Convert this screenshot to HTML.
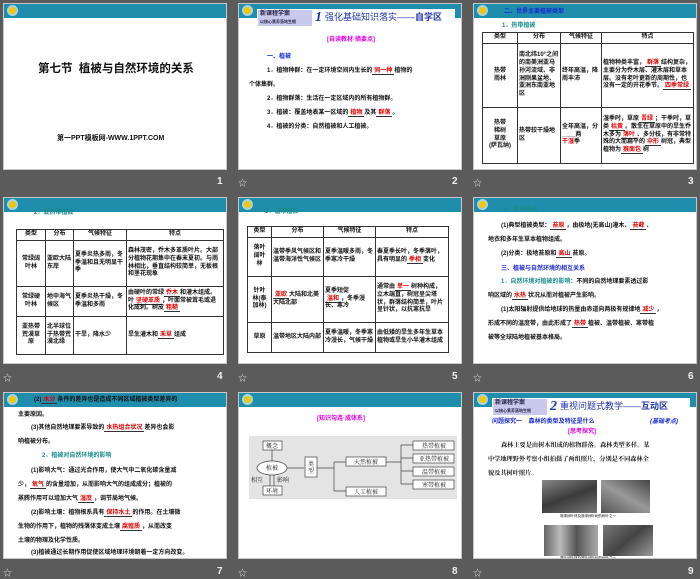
<!DOCTYPE html>
<html><head><meta charset="utf-8"><style>
*{margin:0;padding:0;box-sizing:border-box}
body{width:700px;height:577px;background:#5b5b5b;position:relative;overflow:hidden;font-family:"Liberation Sans","Noto Sans CJK SC",sans-serif;color:#222}
.s{position:absolute;width:224px;height:167px;background:#fff;border:1px solid #c8c8c8;overflow:hidden}
.hd{position:absolute;left:0;top:0;width:100%;height:14px;background:#1f8eac}
.sun{position:absolute;left:3px;top:1px;width:11px;height:11px;border-radius:50%;background:#f3c600;border:2px solid #a8d4e0}
.n{position:absolute;color:#eee;font:bold 10px "Liberation Sans",sans-serif}
.st{position:absolute;color:#ddd;font-size:9px}
.a{position:absolute;white-space:nowrap;font-size:6px;line-height:8px;font-weight:bold;color:#111}
.r{color:#e00000}
.u{border-bottom:1px solid #333;color:#e00000;padding:0 2px}
table{position:absolute;border-collapse:collapse;font-size:6px;line-height:7.8px;font-weight:bold;color:#111}
td{border:1px solid #333;padding:0 1px;vertical-align:middle}
th{border:1px solid #333;font-weight:bold;height:11px}
.c{text-align:center}
.logo{position:absolute;background:#c9c9ee;font-size:6px;line-height:7px;color:#224;padding:1px 2px;font-weight:bold}
</style></head><body>

<!-- slide 1 -->
<div class="s" style="left:3px;top:3px"><div class="hd"></div><div class="sun"></div>
<div class="a" style="left:34px;top:58px;font-size:11.5px;line-height:14px">第七节&nbsp; 植被与自然环境的关系</div>
<div class="a" style="left:53px;top:131px;font-size:7px">第一PPT模板网-WWW.1PPT.COM</div>
</div>
<div class="n" style="left:217px;top:176px">1</div>

<!-- slide 2 -->
<div class="s" style="left:238px;top:3px"><div class="hd"></div><div class="sun"></div>
<div style="position:absolute;left:18px;top:5px;width:198px;height:19px;background:#fff"></div>
<div class="logo" style="left:19px;top:6px;width:54px;height:16px">新课程学案<br><span style="font-size:4px">以核心素养落地生根</span></div>
<div class="a" style="left:76px;top:5px;font-size:14px;line-height:17px;color:#2236a8;font-style:italic;font-family:'Liberation Serif',serif">1</div>
<div class="a" style="left:86px;top:8px;font-size:9px;line-height:11px;color:#2236a8;font-weight:normal">强化基础知识落实——<b>自学区</b></div>
<div class="a" style="left:88px;top:32px;color:#e000e0">[自读教材·摘要点]</div>
<div class="a" style="left:28px;top:49px;color:#1a2ad0">一、植被</div>
<div class="a" style="left:28px;top:63px">1．植物种群：在一定环境空间内生长的<span class="u">同一种</span>植物的</div>
<div class="a" style="left:10px;top:77px">个体集群。</div>
<div class="a" style="left:28px;top:91px">2．植物群落：生活在一定区域内的所有植物群。</div>
<div class="a" style="left:28px;top:105px">3．植被：覆盖地表某一区域的<span class="u">植物</span>及其<span class="u">群落</span>。</div>
<div class="a" style="left:28px;top:119px">4．植被的分类：自然植被和人工植被。</div>
</div>
<div class="st" style="left:238px;top:176px">☆</div><div class="n" style="left:452px;top:176px">2</div>

<!-- slide 3 -->
<div class="s" style="left:473px;top:3px"><div class="hd"></div><div class="sun"></div>
<div class="a" style="left:30px;top:4px;color:#1a2ad0">二、世界主要植被类型</div>
<div class="a" style="left:28px;top:18px;color:#1a8a8a">1．热带植被</div>
<table style="left:8px;top:28px;width:212px">
<tr><th style="width:35px">类型</th><th style="width:43px">分布</th><th style="width:41px">气候特征</th><th>特点</th></tr>
<tr style="height:64px"><td class="c">热带<br>雨林</td><td>南北纬10°之间的南美洲亚马孙河流域、非洲刚果盆地、亚洲东南亚地区</td><td>终年高温，降雨丰沛</td><td>植物种类丰富，<span class="u">群落</span>结构复杂，主要分为乔木层、灌木层和草本层。没有老叶更新的周期性，也没有一定的开花季节。<span class="u">四季常绿</span></td></tr>
<tr style="height:56px"><td class="c">热带<br>稀树<br>草原<br>(萨瓦纳)</td><td>热带较干燥地区</td><td>全年高温，分____两<br><span class="r">干湿</span>季</td><td>湿季时，草原<span class="u">青绿</span>；干季时，草类<span class="u">枯黄</span>。散生在草原中的旱生乔木多为<span class="u">落叶</span>、多分枝，有非常特殊的大而扁平的<span class="u">伞形</span>树冠，典型植物为<span class="u">猴面包</span>树</td></tr>
</table>
</div>
<div class="st" style="left:473px;top:176px">☆</div><div class="n" style="left:688px;top:176px">3</div>

<!-- slide 4 -->
<div class="s" style="left:3px;top:197px"><div class="hd"></div><div class="sun"></div>
<div class="a" style="left:30px;top:11px;color:#1a8a8a">2．亚热带植被</div>
<table style="left:12px;top:31px;width:208px">
<tr><th style="width:29px">类型</th><th style="width:28px">分布</th><th style="width:53px">气候特征</th><th>特点</th></tr>
<tr style="height:46px"><td class="c">常绿阔<br>叶林</td><td>亚欧大陆东岸</td><td>夏季炎热多雨，冬季温和且无明显干季</td><td>森林茂密，乔木多革质叶片。大部分植物花期集中在春末夏初。与雨林相比，垂直结构较简单，无板根和茎花现象</td></tr>
<tr style="height:30px"><td class="c">常绿硬<br>叶林</td><td>地中海气候区</td><td>夏季炎热干燥，冬季温和多雨</td><td>由硬叶的常绿<span class="u">乔木</span>和灌木组成。叶<span class="u">坚硬革质</span>，叶面常被茸毛或退化成刺。树皮<span class="u">粗糙</span></td></tr>
<tr style="height:38px"><td class="c">亚热带<br>荒漠草<br>原</td><td>北半球位于热带荒漠北缘</td><td>干旱，降水少</td><td>旱生灌木和<span class="u">禾草</span>组成</td></tr>
</table>
</div>
<div class="st" style="left:3px;top:371px">☆</div><div class="n" style="left:217px;top:371px">4</div>

<!-- slide 5 -->
<div class="s" style="left:238px;top:197px"><div class="hd"></div><div class="sun"></div>
<div class="a" style="left:26px;top:10px;color:#1a8a8a">3．温带植被</div>
<table style="left:8px;top:28px;width:202px">
<tr><th style="width:24px">类型</th><th style="width:52px">分布</th><th style="width:52px">气候特征</th><th>特点</th></tr>
<tr style="height:39px"><td class="c">落叶<br>阔叶<br>林</td><td>温带季风气候区和温带海洋性气候区</td><td>夏季温暖多雨，冬季寒冷干燥</td><td>春夏季长叶，冬季落叶，具有明显的<span class="u">季相</span>变化</td></tr>
<tr style="height:46px"><td class="c">针叶<br>林(泰<br>加林)</td><td><span class="u">亚欧</span>大陆和北美大陆北部</td><td>夏季短促<br><span class="u">温和</span>，冬季漫长、寒冷</td><td>通常由<span class="u">单一</span>树种构成，立木端直，树冠呈尖塔状，群落结构简单，叶片呈针状，以抗寒抗旱</td></tr>
<tr style="height:30px"><td class="c">草原</td><td>温带地区大陆内部</td><td>夏季温暖，冬季寒冷漫长，气候干燥</td><td>由低矮的旱生多年生草本植物或旱生小半灌木组成</td></tr>
</table>
</div>
<div class="st" style="left:238px;top:371px">☆</div><div class="n" style="left:452px;top:371px">5</div>

<!-- slide 6 -->
<div class="s" style="left:473px;top:197px"><div class="hd"></div><div class="sun"></div>
<div class="a" style="left:30px;top:8px;color:#1a8a8a">4．寒带植被</div>
<div class="a" style="left:27px;top:24px">(1)典型植被类型：<span class="u">苔原</span>，由极地(无高山)灌木、<span class="u">苔藓</span>、</div>
<div class="a" style="left:14px;top:38px">地衣和多年生草本植物组成。</div>
<div class="a" style="left:27px;top:52px">(2)分类：极地苔原和<span class="u">高山</span>苔原。</div>
<div class="a" style="left:27px;top:67px;color:#1a2ad0">三、植被与自然环境的相互关系</div>
<div class="a" style="left:27px;top:80px"><span style="color:#1a8a8a">1．自然环境对植被的影响：</span>不同的自然地理要素透过影</div>
<div class="a" style="left:14px;top:94px">响区域的<span class="u">水热</span>状况从而对植被产生影响。</div>
<div class="a" style="left:27px;top:108px">(1)太阳辐射提供给地球的热量由赤道向两极有规律地<span class="u">减少</span>，</div>
<div class="a" style="left:14px;top:122px">形成不同的温度带，由此形成了<span class="u">热带</span>植被、温带植被、寒带植</div>
<div class="a" style="left:14px;top:136px">被等全球陆地植被基本格局。</div>
</div>
<div class="st" style="left:473px;top:371px">☆</div><div class="n" style="left:688px;top:371px">6</div>

<!-- slide 7 -->
<div class="s" style="left:3px;top:392px"><div class="hd"></div><div class="sun"></div>
<div class="a" style="left:30px;top:3px">(2)<span class="u">水分</span>条件的差异也是造成不同区域植被类型差异的</div>
<div class="a" style="left:14px;top:18px">主要原因。</div>
<div class="a" style="left:27px;top:31px">(3)其他自然地理要素导致的<span class="u">水热组合状况</span>差异也会影</div>
<div class="a" style="left:14px;top:45px">响植被分布。</div>
<div class="a" style="left:38px;top:59px;color:#1a8a8a">2．植被对自然环境的影响</div>
<div class="a" style="left:27px;top:74px">(1)影响大气：通过光合作用，使大气中二氧化碳含量减</div>
<div class="a" style="left:14px;top:88px">少，<span class="u">氧气</span>的含量增加，从而影响大气的组成成分；植被的</div>
<div class="a" style="left:14px;top:102px">蒸腾作用可以增加大气<span class="u">湿度</span>，调节局地气候。</div>
<div class="a" style="left:27px;top:116px">(2)影响土壤：植物根系具有<span class="u">保持水土</span>的作用。在土壤微</div>
<div class="a" style="left:14px;top:130px">生物的作用下，植物的残落体变成土壤<span class="u">腐殖质</span>，从而改变</div>
<div class="a" style="left:14px;top:144px">土壤的物理及化学性质。</div>
<div class="a" style="left:27px;top:156px">(3)植被通过长期作用促使区域地理环境朝着一定方向改变。</div>
</div>
<div class="st" style="left:3px;top:566px">☆</div><div class="n" style="left:217px;top:566px">7</div>

<!-- slide 8 -->
<div class="s" style="left:238px;top:392px"><div class="hd"></div><div class="sun"></div>
<div class="a" style="left:78px;top:22px;color:#e000e0">[知识勾连·成体系]</div>
<div style="position:absolute;left:10px;top:43px;width:208px;height:63px;background:#e4e4e4"></div>
<svg style="position:absolute;left:0;top:0" width="224" height="167" font-family="Liberation Serif,Noto Serif CJK SC,serif" font-size="6">
<g fill="#fff" stroke="#444" stroke-width=".7">
<rect x="24" y="48" width="19" height="9"/><rect x="24" y="93" width="19" height="9"/>
<ellipse cx="33" cy="75" rx="15" ry="7"/>
<rect x="66" y="64" width="12" height="20"/>
<rect x="107" y="64" width="40" height="9"/><rect x="107" y="94" width="40" height="9"/>
<rect x="174" y="48" width="41" height="9"/><rect x="174" y="61" width="41" height="9"/><rect x="174" y="74" width="41" height="9"/><rect x="174" y="87" width="41" height="9"/>
</g>
<g stroke="#444" stroke-width=".7" fill="none">
<path d="M33 57V68M31 82V93M35 82V93M48 75H65M78 75H95M95 69V98M95 69H107M95 98H107M147 69H162M162 52V91M162 52H174M162 65H174M162 78H174M162 91H174"/>
</g>
<g fill="#222"><text x="27" y="55">概念</text><text x="27" y="100">环境</text><text x="27" y="77">植被</text>
<text x="69" y="73">类</text><text x="69" y="80">型</text><text x="12" y="89">相互</text><text x="38" y="89">影响</text>
<text x="115" y="71">天然植被</text><text x="115" y="101">人工植被</text>
<text x="183" y="55">热带植被</text><text x="180" y="68">亚热带植被</text><text x="183" y="81">温带植被</text><text x="183" y="94">寒带植被</text></g>
</svg>
</div>
<div class="st" style="left:238px;top:566px">☆</div><div class="n" style="left:452px;top:566px">8</div>

<!-- slide 9 -->
<div class="s" style="left:473px;top:392px"><div class="hd"></div><div class="sun"></div>
<div style="position:absolute;left:18px;top:5px;width:198px;height:19px;background:#fff"></div>
<div class="logo" style="left:19px;top:6px;width:54px;height:16px">新课程学案<br><span style="font-size:4px">以核心素养落地生根</span></div>
<div class="a" style="left:76px;top:5px;font-size:14px;line-height:17px;color:#2236a8;font-style:italic;font-family:'Liberation Serif',serif">2</div>
<div class="a" style="left:86px;top:8px;font-size:9px;line-height:11px;color:#2236a8;font-weight:normal">重视问题式教学——<b>互动区</b></div>
<div class="a" style="left:18px;top:25px;color:#1a2ad0">问题探究一&nbsp;&nbsp;&nbsp; 森林的类型及特征是什么</div>
<div class="a" style="left:176px;top:25px;color:#1a2ad0;font-style:italic">(基础考点)</div>
<div class="a" style="left:94px;top:35px;color:#e000e0">[思考探究]</div>
<div class="a" style="left:27px;top:49px;font-size:6.2px;font-family:'Liberation Serif','Noto Serif CJK SC',serif">森林主要是由树木组成的植物群落。森林类型多样。某</div>
<div class="a" style="left:14px;top:63px;font-size:6.2px;font-family:'Liberation Serif','Noto Serif CJK SC',serif">中学地理野外考察小组拍摄了两组照片，分别是不同森林全</div>
<div class="a" style="left:14px;top:77px;font-size:6.2px;font-family:'Liberation Serif','Noto Serif CJK SC',serif">貌及其树叶照片。</div>
<div style="position:absolute;left:68px;top:87px;width:55px;height:33px;background:linear-gradient(160deg,#888,#3a3a3a 50%,#777)"></div>
<div style="position:absolute;left:127px;top:87px;width:49px;height:33px;background:linear-gradient(30deg,#555,#999 50%,#444)"></div>
<div class="a" style="left:86px;top:121px;font-size:3.5px;line-height:5px;font-weight:normal">常绿阔叶林及常绿阔叶树的树叶之一</div>
<div style="position:absolute;left:70px;top:132px;width:54px;height:31px;background:linear-gradient(90deg,#666,#bbb 30%,#555 60%,#aaa)"></div>
<div style="position:absolute;left:129px;top:132px;width:50px;height:31px;background:linear-gradient(140deg,#777,#444 50%,#999)"></div>
<div class="a" style="left:86px;top:163px;font-size:3.5px;line-height:4px;font-weight:normal">落叶阔叶林及落叶阔叶树的树叶之一</div>
</div>
<div class="st" style="left:473px;top:566px">☆</div><div class="n" style="left:688px;top:566px">9</div>

</body></html>
